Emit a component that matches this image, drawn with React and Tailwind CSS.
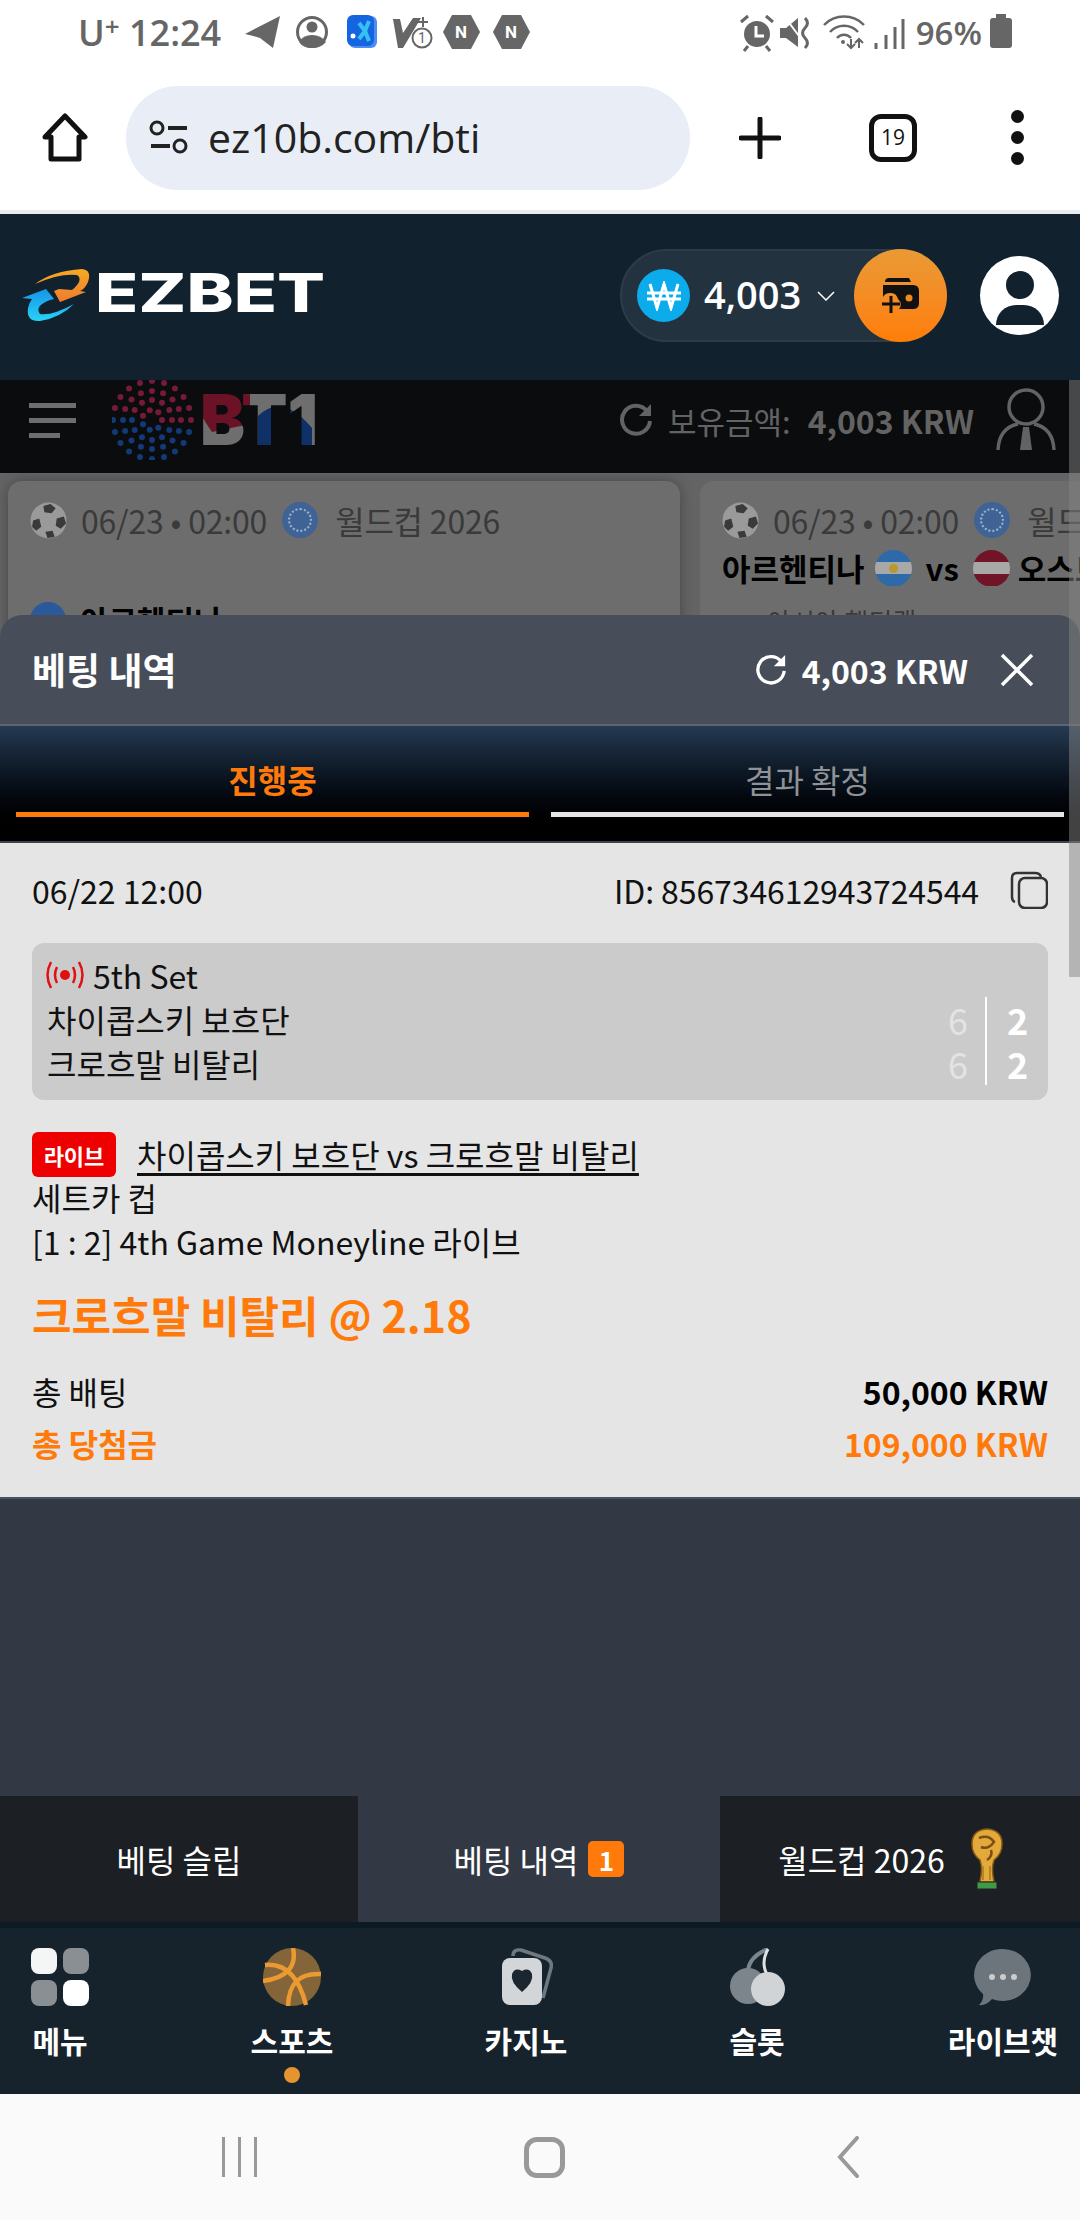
import React from 'react';

const FONT = "font-['Noto_Sans_CJK_KR','Noto_Sans',sans-serif]";

// 상태바 아이콘
const StatusIcons = () => (
  <svg width="286" height="40" viewBox="0 0 286 40" className="shrink-0">
    <path d="M0 21 L35 3 L28 35 L15 25 Q12 24 0 21 Z" fill="#666" />
    <circle cx="67" cy="19" r="14.5" fill="none" stroke="#666" strokeWidth="3" />
    <circle cx="67" cy="14" r="5.5" fill="#666" />
    <path d="M54 29 Q58 22 67 22 Q76 22 81 29 Q76 35 67 35 Q58 35 54 29 Z" fill="#666" />
    <rect x="104" y="3" width="28" height="32" rx="6" fill="#4c8cf5" />
    <rect x="102" y="2" width="27" height="31" rx="6" fill="#1565e0" />
    <path d="M114 10 l6 8 -6 8 M124 8 l-4 10 4 10" stroke="#35c2f2" strokeWidth="4" fill="none" />
    <circle cx="108" cy="23" r="2.5" fill="#fff" />
    <path d="M148 6 h7 l3 14 10 -15 h8 l-18 30 h-5 z" fill="#666" />
    <path d="M178 4 v10 M173 9 h10" stroke="#666" strokeWidth="2" />
    <circle cx="177" cy="25" r="9.5" fill="#fff" stroke="#666" strokeWidth="2" />
    <text x="173" y="30" fontSize="14" fill="#666" fontFamily="Roboto, sans-serif">1</text>
    <polygon points="207,2 226,2 235,19 226,36 207,36 198,19" fill="#666" />
    <text x="210" y="25" fontSize="17" fontWeight="700" fill="#fff" fontFamily="Roboto, sans-serif">N</text>
    <polygon points="257,2 276,2 285,19 276,36 257,36 248,19" fill="#666" />
    <text x="260" y="25" fontSize="17" fontWeight="700" fill="#fff" fontFamily="Roboto, sans-serif">N</text>
  </svg>
);

const StatusRight = () => (
  <svg width="165" height="40" viewBox="0 0 165 40" className="shrink-0">
    <circle cx="17" cy="21" r="13" fill="#666" />
    <path d="M16 13 v10 h8" stroke="#fff" strokeWidth="3" fill="none" />
    <path d="M1 9 L8 3 M26 3 L33 9 M8 33 L4 38 M26 33 L30 38" stroke="#666" strokeWidth="3" />
    <path d="M40 15 h6 l12 -10 v29 l-12 -9 h-6 z" fill="#666" />
    <path d="M44 3 L62 27" stroke="#fff" strokeWidth="2" />
    <path d="M65 5 q5 5 0 10 t0 10 t0 10" stroke="#666" strokeWidth="3" fill="none" />
    <path d="M84 12 a28 28 0 0 1 40 0 M90 19 a19 19 0 0 1 28 0 M97 25 a9 9 0 0 1 14 0" stroke="#666" strokeWidth="2.5" fill="none" />
    <circle cx="103" cy="29" r="2" fill="#666" />
    <path d="M111 26 v9 M107 31 l4 4 4 -4 M119 35 v-9 M115 30 l4 -4 4 4" stroke="#666" strokeWidth="2" fill="none" />
    <path d="M136 36 v-6 M146 36 v-14 M155 36 v-22 M163 36 v-30" stroke="#666" strokeWidth="3" />
  </svg>
);

const StatusBar = () => (
  <div className="h-[65px] bg-white flex items-center justify-between pl-[78px] pr-[68px] text-[#666]">
    <div className="flex items-center">
      <span className="w-[167px] shrink-0 flex items-start font-['Open_Sans',sans-serif] font-semibold text-[36px] leading-[44px] whitespace-pre">
        U<span className="text-[26px] leading-[30px]">+</span> 12:24
      </span>
      <StatusIcons />
    </div>
    <div className="flex items-center">
      <StatusRight />
      <span className="ml-[11px] font-['Open_Sans',sans-serif] font-semibold text-[33px] leading-none">96%</span>
      <div className="relative ml-[8px] w-[22px] h-[30px] bg-[#666] rounded-[3px]">
        <div className="absolute top-[-4px] left-[6px] w-[10px] h-[4px] bg-[#666]" />
      </div>
    </div>
  </div>
);

const BrowserBar = () => (
  <div className="h-[149px] bg-white flex items-center pl-[42px] border-b-4 border-[#e8ebf0]">
    <svg width="46" height="50" viewBox="0 0 46 50" className="shrink-0">
      <path d="M3 24 L23 3 L43 24 H37 V46 H9 V24 Z" fill="none" stroke="#111" strokeWidth="5" strokeLinejoin="round" />
    </svg>
    <div className="ml-[38px] w-[564px] h-[104px] rounded-[52px] bg-[#e8edf6] flex items-center pl-[22px]">
      <svg width="42" height="36" viewBox="0 0 42 36">
        <circle cx="9" cy="8" r="6" fill="none" stroke="#222" strokeWidth="3" />
        <path d="M20 8 H39 M3 26 H22" stroke="#222" strokeWidth="4" />
        <circle cx="32" cy="26" r="6" fill="none" stroke="#222" strokeWidth="3" />
      </svg>
      <span className="ml-[18px] font-['Open_Sans',sans-serif] font-medium text-[41px] text-[#222]">ez10b.com/bti</span>
    </div>
    <svg width="42" height="42" viewBox="0 0 42 42" className="ml-[49px]">
      <path d="M21 2 V40 M2 21 H40" stroke="#111" strokeWidth="5" strokeLinecap="round" />
    </svg>
    <div className="ml-[88px] w-[48px] h-[48px] rounded-[12px] border-[5px] border-[#111] flex items-center justify-center text-[21px] text-[#111] font-['Open_Sans',sans-serif]">19</div>
    <div className="ml-[94px] flex flex-col gap-[8px]">
      <div className="w-[13px] h-[13px] rounded-full bg-[#111]" />
      <div className="w-[13px] h-[13px] rounded-full bg-[#111]" />
      <div className="w-[13px] h-[13px] rounded-full bg-[#111]" />
    </div>
  </div>
);

const EzbetLogo = () => (
  <svg width="312" height="56" viewBox="0 0 312 56">
    <defs>
      <linearGradient id="ezo" x1="0" y1="0" x2="0" y2="1">
        <stop offset="0" stopColor="#f7a823" />
        <stop offset="1" stopColor="#ee7b30" />
      </linearGradient>
      <linearGradient id="ezb" x1="0" y1="0" x2="0" y2="1">
        <stop offset="0" stopColor="#1594e8" />
        <stop offset="1" stopColor="#27d3f6" />
      </linearGradient>
    </defs>
    <path d="M13 18 Q30 5 60 3 Q70 4 66 16 Q63 23 58 25 L64 26 L38 36 L32 25 L37 23 L50 24 Q62 14 55 9 Q38 7 13 18 Z" fill="url(#ezo)" />
    <path d="M0 32 L24 23 L32 33 L28 34 Q12 40 18 48 Q30 50 52 38 Q38 52 18 55 Q4 56 6 42 Q7 37 10 33 Z" fill="url(#ezb)" />
    <text x="73" y="46" textLength="230" lengthAdjust="spacingAndGlyphs" fontSize="54" fontWeight="800" fill="#fff" fontFamily="Inter, sans-serif">EZBET</text>
  </svg>
);

const AppHeader = () => (
  <div className="h-[166px] bg-[#11222e] flex items-start pl-[22px] pr-[21px] pt-[35px]">
    <div className="pt-[17px]"><EzbetLogo /></div>
    <div className="ml-auto flex items-center">
      <div className="w-[327px] h-[93px] rounded-full bg-[#22333f] border-2 border-[#2c3c48] flex items-center pl-[15px] relative">
        <div className="w-[53px] h-[53px] rounded-full bg-[#0cabec] flex items-center justify-center">
          <svg width="34" height="30" viewBox="0 0 34 30">
            <path d="M3 3 L10 27 L17 3 L24 27 L31 3 M0 12 H34 M0 18 H34" stroke="#fff" strokeWidth="3" fill="none" />
          </svg>
        </div>
        <span className="ml-[14px] mb-[4px] text-[38px] font-semibold text-white font-['Open_Sans',sans-serif] leading-none">4,003</span>
        <svg width="18" height="10" viewBox="0 0 18 10" className="ml-[16px]">
          <path d="M1 1 L9 9 L17 1" stroke="#fff" strokeWidth="1.5" fill="none" />
        </svg>
        {/* 충전 버튼 */}
        <div className="absolute right-[-2px] top-[-2px] w-[93px] h-[93px] rounded-full bg-gradient-to-b from-[#e99a35] to-[#ff7d05] flex items-center justify-center">
          <svg width="40" height="36" viewBox="0 0 40 36">
            <path d="M4 4 Q4 0 8 0 H28 L30 4 H6 M2 7 H32 Q38 7 38 13 V25 Q38 31 32 31 H18 Q22 26 17 21 Q15 14 9 15 Q4 15 2 19 Z" fill="#111" />
            <circle cx="28" cy="20" r="3.5" fill="#f08a18" />
            <path d="M10 18 V35 M1 26 H19" stroke="#111" strokeWidth="3" />
          </svg>
        </div>
      </div>
      <div className="ml-[33px] w-[79px] h-[79px] rounded-full bg-white overflow-hidden flex flex-col items-center">
        <div className="mt-[15px] w-[28px] h-[28px] rounded-full bg-[#11222e]" />
        <div className="mt-[6px] w-[48px] h-[20px] rounded-t-full rounded-b-[20px] bg-[#11222e]" />
      </div>
    </div>
  </div>
);

// BT1 로고의 점 무늬
const dotRings = [
  { r: 39, n: 20 },
  { r: 29, n: 16 },
  { r: 20, n: 12 },
  { r: 10, n: 7 },
];

const Bt1Logo = () => (
  <svg width="204" height="80" viewBox="0 0 204 80">
    <defs>
      <clipPath id="bt1clip">
        <text x="88" y="65" fontSize="70" fontWeight="900" textLength="118" lengthAdjust="spacingAndGlyphs" fontFamily="Inter, sans-serif">BT1</text>
      </clipPath>
    </defs>
    {dotRings.map((ring) =>
      Array.from({ length: ring.n }).map((_, i) => {
        const a = (i / ring.n) * Math.PI * 2;
        const x = 40 + Math.cos(a) * ring.r;
        const y = 40 + Math.sin(a) * ring.r;
        return <circle key={`${ring.r}-${i}`} cx={x} cy={y} r="3" fill={y < 40 + (x - 40) * 0.1 ? '#761a37' : '#123a78'} />;
      })
    )}
    <g clipPath="url(#bt1clip)">
      <rect x="80" y="0" width="130" height="80" fill="#6e6e6e" />
      <path d="M85 8 H138 V44 L100 52 Q90 38 85 26 Z" fill="#6b1226" />
      <path d="M146 68 V36 Q170 12 200 48 V68 Z" fill="#0f3168" />
    </g>
  </svg>
);

const Bt1Bar = () => (
  <div className="h-[93px] bg-[#0b0c0e] flex items-center pl-[29px] pr-[24px] pb-[13px] text-[#636363] overflow-hidden">
    <div className="flex flex-col gap-[10px] w-[47px]">
      <div className="h-[5px] w-[47px] bg-[#6e6e6e]" />
      <div className="h-[5px] w-[47px] bg-[#6e6e6e]" />
      <div className="h-[5px] w-[31px] bg-[#6e6e6e]" />
    </div>
    <div className="ml-[36px]"><Bt1Logo /></div>
    <svg width="34" height="34" viewBox="0 0 34 34" className="ml-auto">
      <path d="M28 8 A14 14 0 1 0 31 18" stroke="#636363" strokeWidth="4" fill="none" />
      <path d="M32 1 V13 H20 Z" fill="#636363" />
    </svg>
    <span className="ml-[15px] text-[31px] leading-none">보유금액:</span>
    <span className="ml-[17px] text-[32px] leading-none font-bold">4,003 KRW</span>
    <svg width="60" height="64" viewBox="0 0 60 64" className="ml-[22px]">
      <circle cx="30" cy="19" r="17" fill="none" stroke="#636363" strokeWidth="3.5" />
      <path d="M2 62 Q3 40 22 36 M58 62 Q57 40 38 36" fill="none" stroke="#636363" strokeWidth="3.5" />
      <path d="M27 39 H33 L36 62 H24 Z" fill="#636363" />
    </svg>
  </div>
);

const Ball = () => (
  <svg width="37" height="37" viewBox="0 0 36 36" className="shrink-0">
    <circle cx="18" cy="18" r="17.5" fill="#9a9a9a" />
    <path d="M13 4 L20 2 L25 6 L21 11 L14 10 Z M26 16 L33 14 L35 21 L30 26 L25 23 Z M3 18 L9 16 L11 24 L6 28 L2 24 Z M15 29 L22 28 L24 34 L17 35 Z" fill="#3a3a3a" />
  </svg>
);

const LeagueBadge = () => (
  <div className="w-[36px] h-[36px] rounded-full bg-[#3f6395] flex items-center justify-center shrink-0">
    <div className="w-[24px] h-[24px] rounded-full border-2 border-dotted border-[#9ab1cc]" />
  </div>
);

const Flag = ({ top, middle, sun }) => (
  <div className="relative w-[37px] h-[37px] rounded-full overflow-hidden flex flex-col shrink-0">
    <div className={`h-1/3 ${top}`} />
    <div className={`h-1/3 ${middle}`} />
    <div className={`h-1/3 ${top}`} />
    {sun && <div className="absolute left-[14px] top-[14px] w-[9px] h-[9px] rounded-full bg-[#b9992f]" />}
  </div>
);

const CardMeta = () => (
  <div className="flex items-center h-[40px] text-[32px] leading-[40px] whitespace-nowrap tracking-[-0.2px]">
    <Ball />
    <span className="ml-[14px]">06/23 • 02:00</span>
    <span className="ml-[15px]"><LeagueBadge /></span>
    <span className="ml-[17px]">월드컵 2026</span>
  </div>
);

const MatchCards = () => (
  <div className="h-[162px] bg-[#646464] flex gap-[20px] pl-[8px] pt-[8px] overflow-hidden text-[#3a3a3a]">
    <div className="w-[672px] shrink-0 h-[200px] rounded-[14px] bg-[#6d6d6d] pl-[22px] pt-[19px] shadow-[0_0_14px_rgba(0,0,0,0.3)]">
      <CardMeta />
      <div className="mt-[62px] flex items-center gap-[14px]">
        <div className="w-[36px] h-[36px] rounded-full bg-[#2a5a9a]" />
        <span className="text-[31px] leading-[36px] font-bold text-[#000]">아르헨티나</span>
      </div>
    </div>
    <div className="w-[400px] shrink-0 h-[200px] rounded-l-[14px] bg-[#6d6d6d] pl-[22px] pt-[19px] whitespace-nowrap">
      <CardMeta />
      <div className="mt-[8px] h-[40px] flex items-center text-[31px] font-bold text-black">
        <span>아르헨티나</span>
        <span className="ml-[10px]"><Flag top="bg-[#2f6aa8]" middle="bg-[#a8a8a8]" sun /></span>
        <span className="ml-[14px]">vs</span>
        <span className="ml-[14px]"><Flag top="bg-[#701428]" middle="bg-[#a8a8a8]" /></span>
        <span className="ml-[8px]">오스트리아</span>
      </div>
      <div className="mt-[13px] ml-[45px] text-[26px] leading-[40px]">아시아 핸디캡</div>
    </div>
  </div>
);

const SheetHeader = () => (
  <div className="h-[111px] bg-[#474e59] rounded-t-[22px] flex items-center pl-[32px] pr-[46px] border-b-2 border-[#5d6470] text-white">
    <span className="text-[37px] font-bold">베팅 내역</span>
    <svg width="32" height="34" viewBox="0 0 34 34" className="ml-auto">
      <path d="M28 8 A14 14 0 1 0 31 18" stroke="#fff" strokeWidth="3.5" fill="none" />
      <path d="M32 1 V13 H20 Z" fill="#fff" />
    </svg>
    <span className="ml-[15px] text-[32px] font-bold">4,003 KRW</span>
    <svg width="34" height="34" viewBox="0 0 34 34" className="ml-[32px]">
      <path d="M2 2 L32 32 M32 2 L2 32" stroke="#fff" strokeWidth="3.5" />
    </svg>
  </div>
);

const SheetTabs = () => (
  <div className="h-[117px] bg-gradient-to-b from-[#253a52] to-[#000000] border-b-2 border-[#3b4450] flex gap-[22px] px-[16px] items-stretch">
    <div className="flex-1 flex flex-col items-center pt-[31px] text-[#ff7a0a] font-bold text-[32px] leading-[44px]">
      진행중
      <div className="mt-[11px] h-[5px] w-full bg-[#ff7a0a]" />
    </div>
    <div className="flex-1 flex flex-col items-center pt-[31px] text-[#8f9296] text-[32px] leading-[44px]">
      결과 확정
      <div className="mt-[11px] h-[5px] w-full bg-[#e5e5e5]" />
    </div>
  </div>
);

const LiveIcon = () => (
  <svg width="40" height="30" viewBox="0 0 40 30" className="shrink-0 ml-[-2px]">
    <circle cx="20" cy="15" r="5" fill="#e01010" />
    <path d="M12 7 Q8 15 12 23 M28 7 Q32 15 28 23 M6 2 Q-1 15 6 28 M34 2 Q41 15 34 28" stroke="#e01010" strokeWidth="2.5" fill="none" />
  </svg>
);

const ScoreRow = ({ name, game, set }) => (
  <div className="flex items-center h-[44px]">
    <span>{name}</span>
    <span className="ml-auto w-[30px] text-center text-[#e3e3e3] text-[36px] leading-none">{game}</span>
    <div className="w-[2px] h-[44px] bg-white ml-[12px]" />
    <span className="w-[61px] text-center font-bold text-white text-[36px] leading-none">{set}</span>
  </div>
);

const BetCard = () => (
  <div className="h-[656px] bg-[#e5e5e5] border-b-2 border-[#4a505c] px-[32px] pt-[25px] text-[32px] text-[#111] leading-[44px]">
    <div className="flex items-center h-[44px]">
      <span>06/22 12:00</span>
      <span className="ml-auto tracking-[-0.1px]">ID: 856734612943724544</span>
      <svg width="38" height="38" viewBox="0 0 38 38" className="ml-[31px]">
        <rect x="9" y="7" width="28" height="30" rx="6" fill="none" stroke="#333" strokeWidth="2.5" />
        <path d="M5 31 Q2 30 2 26 V7 Q2 2 7 2 H25 Q30 2 31 6" fill="none" stroke="#333" strokeWidth="2.5" />
      </svg>
    </div>
    <div className="mt-[31px] h-[157px] rounded-[12px] bg-[#cbcbcb] pl-[15px] pt-[10px]">
      <div className="flex items-center h-[44px] gap-[8px]">
        <LiveIcon />
        <span>5th Set</span>
      </div>
      <ScoreRow name="차이콥스키 보흐단" game="6" set="2" />
      <ScoreRow name="크로흐말 비탈리" game="6" set="2" />
    </div>
    <div className="mt-[32px] flex items-center h-[45px]">
      <span className="w-[84px] h-[45px] rounded-[6px] bg-[#ee0000] text-white font-bold text-[22px] flex items-center justify-center">라이브</span>
      <span className="ml-[21px] mt-[-2px] underline decoration-[3px] underline-offset-[5px]">차이콥스키 보흐단 vs 크로흐말 비탈리</span>
    </div>
    <div className="mt-[-2px]">세트카 컵</div>
    <div>[1 : 2] 4th Game Moneyline 라이브</div>
    <div className="mt-[23px] text-[43px] leading-[56px] font-bold text-[#ff7a0a]">크로흐말 비탈리 @ 2.18</div>
    <div className="mt-[25px] flex justify-between h-[48px] items-center">
      <span>총 배팅</span>
      <span className="font-bold text-[#000]">50,000 KRW</span>
    </div>
    <div className="mt-[4px] flex justify-between h-[48px] items-center font-bold text-[#ff7a0a]">
      <span>총 당첨금</span>
      <span>109,000 KRW</span>
    </div>
  </div>
);

const Trophy = () => (
  <svg width="36" height="62" viewBox="0 0 36 62">
    <path d="M18 1 Q33 2 33 16 Q33 26 25 32 Q22 40 25 54 H11 Q14 40 11 32 Q3 26 3 16 Q3 2 18 1 Z" fill="#e3a93a" stroke="#8a5e10" strokeWidth="1.5" />
    <path d="M10 10 Q20 6 25 14 Q19 22 12 19 M22 22 Q24 28 18 32" stroke="#7a5010" strokeWidth="2.5" fill="none" />
    <path d="M14 38 V52 M21 38 V52" stroke="#a87a20" strokeWidth="1.5" />
    <rect x="8" y="54" width="20" height="7" fill="#3f9a45" stroke="#222" strokeWidth="1" />
  </svg>
);

const SlipTabs = () => (
  <div className="h-[126px] flex text-[32px] text-white">
    <div className="w-[358px] bg-[#1c1f24] flex items-center justify-center">베팅 슬립</div>
    <div className="w-[362px] bg-[#323844] flex items-center justify-center">
      베팅 내역
      <span className="ml-[10px] w-[36px] h-[36px] rounded-[5px] bg-[#ff7a0a] text-[26px] font-bold flex items-center justify-center">1</span>
    </div>
    <div className="flex-1 bg-[#1c1f24] flex items-center justify-center gap-[24px] pr-[17px]">
      월드컵 2026
      <Trophy />
    </div>
  </div>
);

const MenuIcon = () => (
  <div className="grid grid-cols-2 gap-[6px] w-[58px] h-[58px]">
    <div className="rounded-[8px] bg-[#f4f5f5]" />
    <div className="rounded-[8px] bg-[#8a8f94]" />
    <div className="rounded-[8px] bg-[#8a8f94]" />
    <div className="rounded-[8px] bg-white" />
  </div>
);

const SportsIcon = () => (
  <svg width="58" height="58" viewBox="0 0 58 58">
    <circle cx="29" cy="29" r="29" fill="#84653a" />
    <path d="M30 0 Q36 28 0 33 M2 17 Q32 14 43 57 M58 26 Q26 24 25 58" stroke="#ea9a30" strokeWidth="4.5" fill="none" />
  </svg>
);

const CasinoIcon = () => (
  <svg width="54" height="58" viewBox="0 0 54 58">
    <path d="M14 8 Q14 1 22 2 L46 10 Q54 13 52 20 L44 50" fill="none" stroke="#6e7880" strokeWidth="3.5" />
    <rect x="3" y="10" width="40" height="47" rx="8" fill="#d3d6d8" />
    <path d="M23 44 Q11 34 13 26 Q16 19 23 23 Q30 19 33 26 Q35 34 23 44 Z" fill="#1a2630" />
  </svg>
);

const SlotIcon = () => (
  <svg width="58" height="58" viewBox="0 0 58 58">
    <circle cx="20" cy="38" r="18" fill="#7c858b" />
    <path d="M40 1 Q22 8 20 22" stroke="#7c858b" strokeWidth="4" fill="none" />
    <path d="M40 1 Q32 16 40 28" stroke="#dfe2e3" strokeWidth="3" fill="none" />
    <circle cx="40" cy="41" r="17" fill="#d1d4d6" />
  </svg>
);

const ChatIcon = () => (
  <svg width="58" height="58" viewBox="0 0 58 58">
    <path d="M29 1 A28 26 0 1 1 18 51 Q12 58 5 57 Q10 52 9 46 A28 26 0 0 1 29 1 Z" fill="#6d757c" />
    <circle cx="18" cy="29" r="3" fill="#ccc" />
    <circle cx="29" cy="29" r="3" fill="#ccc" />
    <circle cx="40" cy="29" r="3" fill="#ccc" />
  </svg>
);

const navItems = [
  { label: '메뉴', icon: <MenuIcon /> },
  { label: '스포츠', icon: <SportsIcon />, active: true },
  { label: '카지노', icon: <CasinoIcon /> },
  { label: '슬롯', icon: <SlotIcon /> },
  { label: '라이브챗', icon: <ChatIcon /> },
];

const BottomNav = () => (
  <div className="h-[172px] bg-[#17232c] border-t-[6px] border-[#0c1a23] grid grid-cols-[120px_344px_124px_338px_154px] pt-[20px]">
    {navItems.map((item) => (
      <div key={item.label} className="flex flex-col items-center">
        <div className="h-[58px] flex items-center justify-center">{item.icon}</div>
        <span className="mt-[12px] text-[30px] leading-[44px] font-bold text-white whitespace-nowrap">{item.label}</span>
        {item.active && <div className="mt-[5px] w-[16px] h-[16px] rounded-full bg-[#e59530]" />}
      </div>
    ))}
  </div>
);

const SystemNav = () => (
  <div className="h-[126px] bg-[#fafafa] flex items-center justify-between pl-[222px] pr-[220px]">
    <div className="flex gap-[13px]">
      <div className="w-[3px] h-[40px] bg-[#999]" />
      <div className="w-[3px] h-[40px] bg-[#999]" />
      <div className="w-[3px] h-[40px] bg-[#999]" />
    </div>
    <div className="w-[41px] h-[41px] rounded-[13px] border-[5px] border-[#999] mr-[4px]" />
    <svg width="24" height="42" viewBox="0 0 24 42">
      <path d="M21 2 L4 21 L21 40" stroke="#999" strokeWidth="4" fill="none" strokeLinecap="round" />
    </svg>
  </div>
);

export default function App() {
  return (
    <div className={`w-[1080px] h-[2220px] overflow-hidden flex flex-col relative ${FONT}`}>
      <StatusBar />
      <BrowserBar />
      <AppHeader />
      <Bt1Bar />
      <MatchCards />

      {/* 베팅 내역 시트 */}
      <div className="relative mt-[-20px] flex flex-col">
        <SheetHeader />
        <SheetTabs />
        <BetCard />
        <div className="h-[297px] bg-[#323844]" />
        <SlipTabs />
      </div>

      <BottomNav />
      <SystemNav />

      {/* 스크롤바 */}
      <div className="absolute right-0 top-[380px] w-[11px] h-[597px] bg-[#838383]/50" />
    </div>
  );
}
